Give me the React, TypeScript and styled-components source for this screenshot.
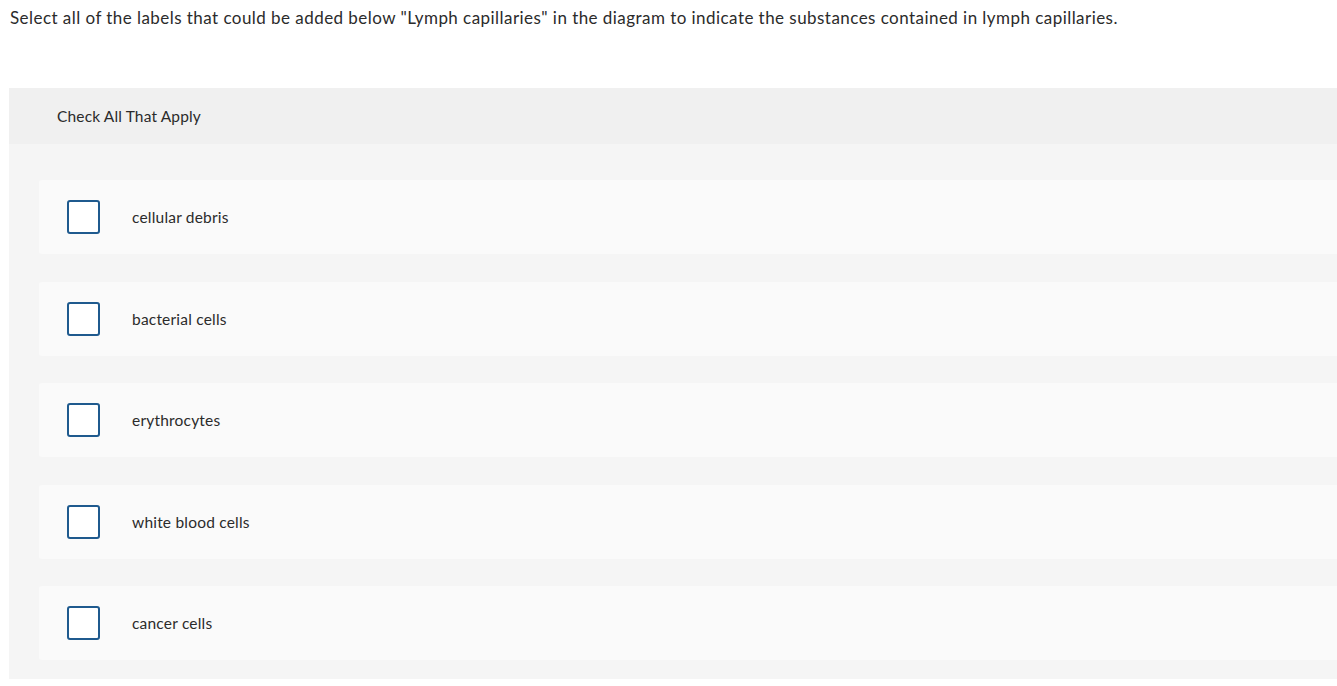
import React from "react";
import styled, { createGlobalStyle } from "styled-components";

// 선택지 목록
const options: Array<string> = [
    "cellular debris",
    "bacterial cells",
    "erythrocytes",
    "white blood cells",
    "cancer cells",
];

const GlobalStyle = createGlobalStyle`
body {
    margin: 0;
    background-color: #fff;
    font-family: Lato, "Open Sans", sans-serif;
    color: #2b2b2b;
}
`;

export default function App() {
    return (
        <Page>
            <GlobalStyle />
            <Question>
                Select all of the labels that could be added below "Lymph capillaries" in the diagram to indicate the substances contained in lymph capillaries.
            </Question>

            <Panel>
                <PanelHeader>Check All That Apply</PanelHeader>
                <OptionList>
                    {options.map((label) => (
                        <OptionRow key={label}>
                            <CheckBox type="checkbox" aria-label={label} />
                            <OptionLabel>{label}</OptionLabel>
                        </OptionRow>
                    ))}
                </OptionList>
            </Panel>
        </Page>
    );
}

const Page = styled.div`
padding: 0 0 0 9px;
`;

const Question = styled.p`
margin: 0;
padding: 8px 0 0 1px;
font-size: 17px;
line-height: 20px;
letter-spacing: 0.45px;
color: #2b2b2b;
`;

const Panel = styled.div`
margin-top: 60px;
`;

const PanelHeader = styled.div`
display: flex;
align-items: center;

height: 56px;
padding-left: 48px;

background-color: #f0f0f0;
font-size: 15.5px;
letter-spacing: 0.15px;
color: #2b2b2b;
`;

const OptionList = styled.div`
display: flex;
flex-direction: column;
gap: 27.5px;

padding: 36px 0 19px 30px;

background-color: #f5f5f5;
`;

const OptionRow = styled.label`
display: flex;
align-items: center;

height: 74px;
padding-left: 28px;

background-color: #fafafa;
border-radius: 3px 0 0 3px;
cursor: pointer;
`;

const CheckBox = styled.input`
appearance: none;
box-sizing: border-box;
width: 33px;
height: 34px;
margin: 0;

background-color: #fff;
border: 2px solid #1f5a8e;
border-radius: 3px;
cursor: pointer;
`;

const OptionLabel = styled.span`
margin-left: 32px;
font-size: 15.5px;
letter-spacing: 0.2px;
color: #2b2b2b;
`;
